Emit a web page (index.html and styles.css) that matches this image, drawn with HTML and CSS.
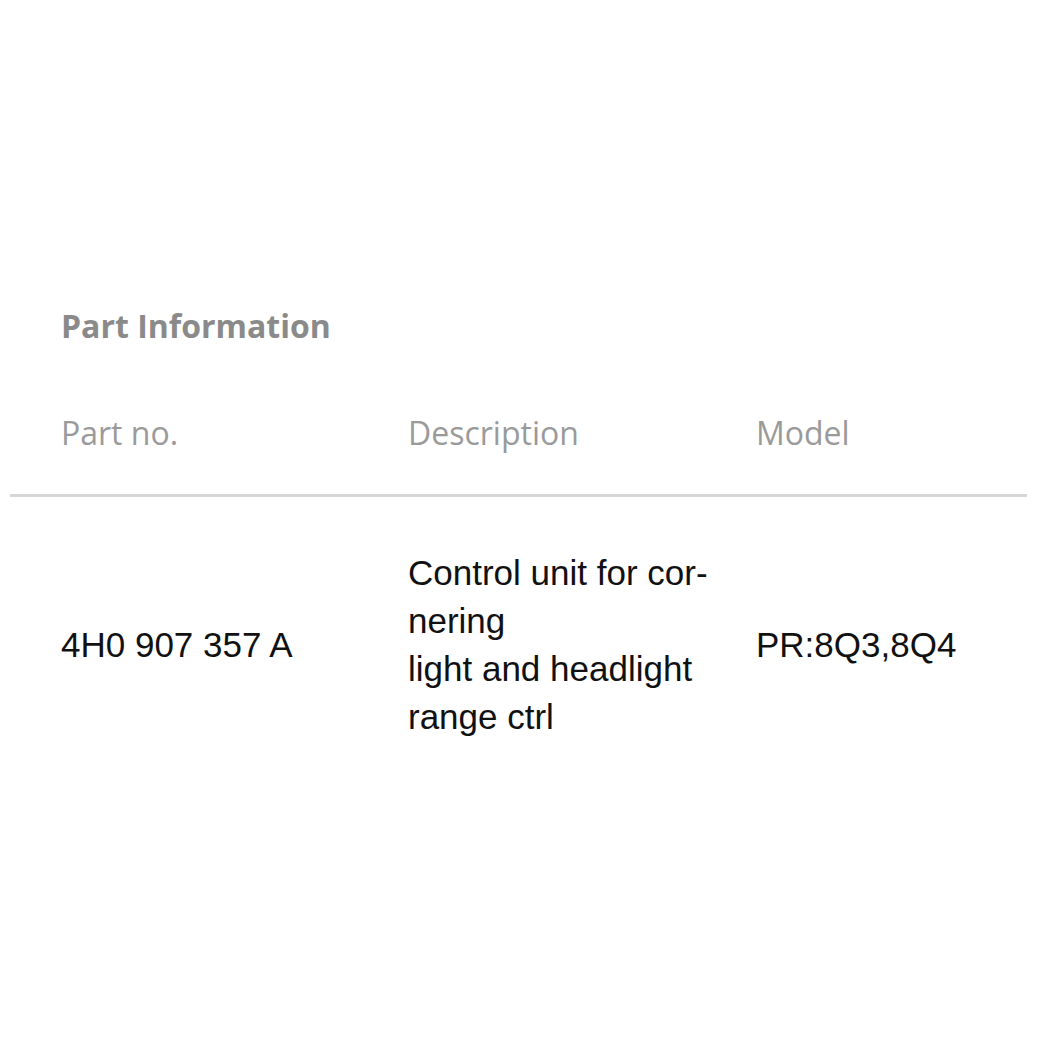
FILE: index.html
```html
<!DOCTYPE html>
<html lang="en">
<head>
    <meta charset="UTF-8">
    <title>Part Information</title>
    <link rel="stylesheet" href="styles.css">
</head>
<body>

<div class="part-info">
    <h2>Part Information</h2>

    <div class="part-table">
        <div class="part-row part-head">
            <div class="cell">Part no.</div>
            <div class="cell">Description</div>
            <div class="cell">Model</div>
        </div>
        <div class="part-row part-body">
            <div class="cell">4H0 907 357 A</div>
            <div class="cell">Control unit for cor-<br>nering<br>light and headlight<br>range ctrl</div>
            <div class="cell">PR:8Q3,8Q4</div>
        </div>
    </div>
</div>

</body>
</html>
```

FILE: styles.css
```css
body {
    margin: 0;
    background-color: #fff;
}

.part-info {
    width: 1017px;
    margin-left: 10px;
    padding-top: 302px;
}

.part-info h2 {
    font-family: "Open Sans", sans-serif;
    font-weight: bold;
    font-size: 32px;
    color: #8a8a8a;
    margin: 0 0 0 51px;
    line-height: 48px;
}

.part-row {
    display: grid;
    grid-template-columns: 347px 348px 1fr;
    padding-left: 51px;
    align-items: center;
}

.part-head {
    font-family: "Open Sans", sans-serif;
    font-size: 32px;
    color: #9a9a9a;
    padding-top: 71px;
    padding-bottom: 49px;
    border-bottom: 3px solid #d6d6d6;
    line-height: 24px;
}

.part-body {
    font-family: "Liberation Sans", Arial, sans-serif;
    font-size: 35px;
    color: #111;
    line-height: 48px;
    padding-top: 52px;
}
```
